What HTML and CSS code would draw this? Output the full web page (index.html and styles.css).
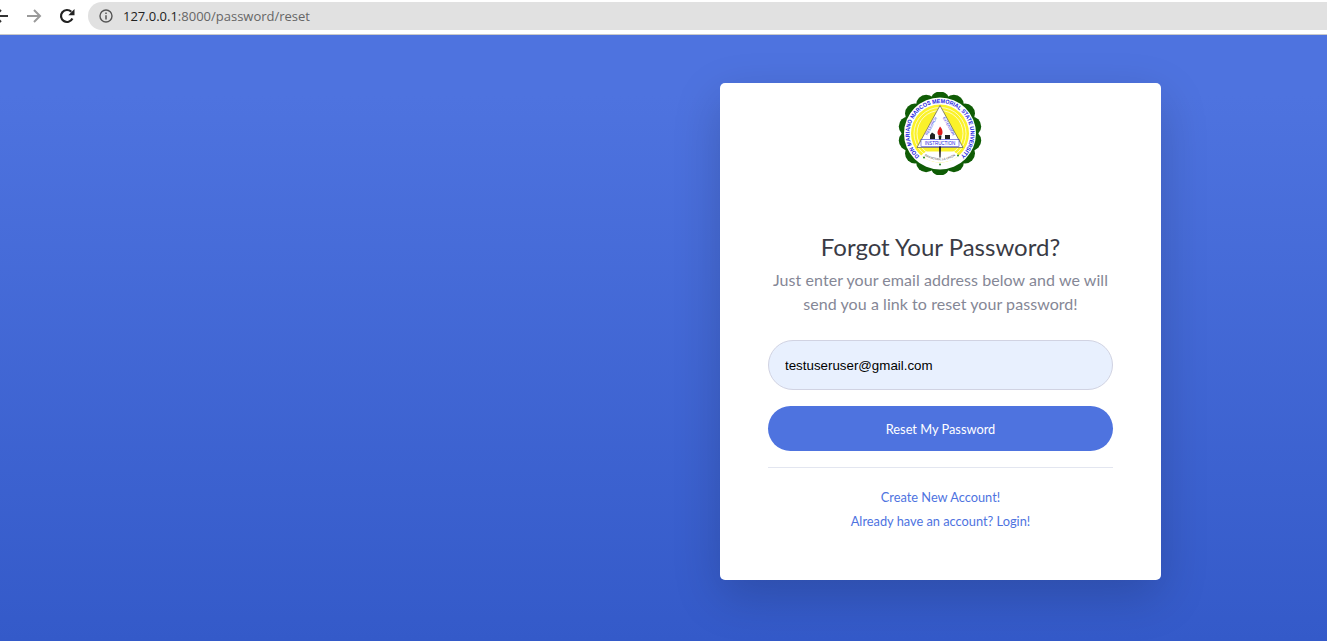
FILE: index.html
```html
<!DOCTYPE html>
<html lang="en">
<head>
    <meta charset="UTF-8">
    <meta name="viewport" content="width=device-width, initial-scale=1.0">
    <title>Forgot Password</title>
    <link rel="stylesheet" href="styles.css">
</head>
<body>

    <div class="toolbar">
        <svg class="nav-icon back" width="16" height="16" viewBox="0 0 16 16"><path d="M15 8H2M8 2L2 8l6 6" fill="none" stroke="#333" stroke-width="2"/></svg>
        <svg class="nav-icon forward" width="16" height="16" viewBox="0 0 16 16"><path d="M1 8h13M8 2l6 6-6 6" fill="none" stroke="#9a9a9a" stroke-width="2"/></svg>
        <svg class="nav-icon reload" width="16" height="16" viewBox="0 0 16 16"><path d="M13.4 10.600A6 6 0 1 1 12.300 3.800" fill="none" stroke="#222" stroke-width="2.200"/><path d="M15.500 1v6.200H9.300z" fill="#222"/></svg>
        <div class="address">
            <svg class="info-icon" width="14" height="14" viewBox="0 0 14 14"><circle cx="7" cy="7" r="6" fill="none" stroke="#555" stroke-width="1.400"/><path d="M7 6.200v4.200M7 3.400v1.600" stroke="#555" stroke-width="1.500"/></svg>
            <span class="host">127.0.0.1</span><span class="path">:8000/password/reset</span>
        </div>
    </div>

    <div class="page">
        <div class="card">
            <div class="logo">
                <svg width="84" height="83" viewBox="0 0.5 84 83">
                    <defs>
                        <path id="ring-top" d="M22.400 65.400A30.500 30.500 0 1 1 61.600 65.400"/>
                        <path id="ring-bottom" d="M24 62A27.500 27.500 0 0 0 60 62"/>
                        <path id="side-left" d="M28 46.500L40.500 24"/>
                        <path id="side-right" d="M43.500 24L56 46.500"/>
                    </defs>
                    <g fill="#0f5c05">
                        <circle cx="42" cy="42" r="36"/>
                        <circle cx="42" cy="10" r="10"/>
                        <circle cx="55.900" cy="13.200" r="10"/>
                        <circle cx="67" cy="22" r="10"/>
                        <circle cx="73.200" cy="34.900" r="10"/>
                        <circle cx="73.200" cy="49.100" r="10"/>
                        <circle cx="67" cy="62" r="10"/>
                        <circle cx="55.900" cy="70.800" r="10"/>
                        <circle cx="42" cy="74" r="10"/>
                        <circle cx="28.100" cy="70.800" r="10"/>
                        <circle cx="17" cy="62" r="10"/>
                        <circle cx="10.800" cy="49.100" r="10"/>
                        <circle cx="10.800" cy="34.900" r="10"/>
                        <circle cx="17" cy="22" r="10"/>
                        <circle cx="28.100" cy="13.200" r="10"/>
                    </g>
                    <circle cx="42" cy="42" r="36" fill="#fff"/>
                    <circle cx="42" cy="42" r="29" fill="#fbf22a"/>
                    <g fill="none" stroke="#fff" stroke-width="0.700">
                        <circle cx="42" cy="42" r="26"/>
                        <circle cx="42" cy="42" r="23"/>
                    </g>
                    <path d="M23 64A29 29 0 0 0 61 64L56 60H28z" fill="#fff"/>
                    <text class="logo-text"><textPath href="#ring-top" startOffset="50%" text-anchor="middle" textLength="146" lengthAdjust="spacingAndGlyphs">DON MARIANO MARCOS MEMORIAL STATE UNIVERSITY</textPath></text>
                    <text class="logo-small"><textPath href="#ring-bottom" startOffset="50%" text-anchor="middle">BACNOTAN, LA UNION</textPath></text>
                    <path d="M42 14L65 56H19z" fill="#fff" stroke="#555" stroke-width="0.700"/>
                    <text class="logo-side"><textPath href="#side-left" startOffset="50%" text-anchor="middle">RESEARCH</textPath></text>
                    <text class="logo-side"><textPath href="#side-right" startOffset="50%" text-anchor="middle">EXTENSION</textPath></text>
                    <rect x="23" y="48" width="38" height="7" fill="#fff" stroke="#1c1ccc" stroke-width="0.500"/>
                    <text class="logo-word" x="42" y="53.500" text-anchor="middle">INSTRUCTION</text>
                    <path d="M42 35c2 2 2.500 4 2.500 6 0 2-1 3-2.500 3s-2.500-1-2.500-3c0-2 1-3 2.500-6z" fill="#e01b1b"/>
                    <path d="M40.500 44h3l-.5 4h-2zM41 55h2l-.4 11h-1.200z" fill="#222"/>
                    <path d="M32 47.500v-4l2-2.500 3 2v4.500zM47 47.500v-4h5v4z" fill="#222"/>
                    <circle cx="26" cy="66" r="1" fill="#2a8a2a"/>
                    <circle cx="42" cy="73" r="1" fill="#2a8a2a"/>
                    <circle cx="60" cy="64" r="1" fill="#2a8a2a"/>
                </svg>
            </div>
            <div class="intro">
                <h1>Forgot Your Password?</h1>
                <p>Just enter your email address below and we will send you a link to reset your password!</p>
            </div>
            <form class="reset-form">
                <input class="email" type="email" value="testuseruser@gmail.com">
                <button type="button">Reset My Password</button>
            </form>
            <hr>
            <div class="links">
                <a href="#">Create New Account!</a>
                <a href="#">Already have an account? Login!</a>
            </div>
        </div>
    </div>

</body>
</html>
```

FILE: styles.css
```css
html, body {
    height: 100%;
}
body {
    margin: 0;
    display: flex;
    flex-direction: column;
    overflow: hidden;
    font-family: Lato, sans-serif;
}
.toolbar {
    height: 35px;
    box-sizing: border-box;
    padding-bottom: 2px;
    flex-shrink: 0;
    display: flex;
    align-items: center;
    background-color: #fff;
    border-bottom: 1px solid #c9c9c9;
}
.nav-icon {
    flex-shrink: 0;
}
.back {
    margin-left: -7px;
}
.forward {
    margin-left: 17px;
}
.reload {
    margin-left: 17px;
}
.address {
    flex: 1;
    height: 28px;
    margin-left: 13px;
    margin-right: -20px;
    padding-left: 11px;
    display: flex;
    align-items: center;
    background-color: #e1e1e1;
    border-radius: 14px;
    font-family: "Open Sans", sans-serif;
    font-size: 13px;
}
.info-icon {
    margin-right: 10px;
}
.host {
    color: #222;
}
.path {
    color: #666;
}
.page {
    flex: 1;
    padding-top: 48px;
    padding-right: 166px;
    display: flex;
    justify-content: flex-end;
    align-items: flex-start;
    background-color: #4e73df;
    background-image: linear-gradient(180deg, #4e73df 10%, #345ac9 100%);
}
.card {
    width: 441px;
    height: 497px;
    box-sizing: border-box;
    padding: 9px 48px 0;
    background-color: #fff;
    border-radius: 5px;
    box-shadow: 0 16px 48px rgba(0, 0, 0, 0.175);
}
.logo {
    display: flex;
    justify-content: center;
    height: 84px;
    padding-right: 1px;
}
.logo-text {
    font-family: "Liberation Sans", sans-serif;
    font-size: 5.800px;
    font-weight: bold;
    fill: #1a1ae0;
}
.logo-small {
    font-family: "Liberation Sans", sans-serif;
    font-size: 3px;
    fill: #444;
}
.logo-side {
    font-family: "Liberation Sans", sans-serif;
    font-size: 3.600px;
    fill: #1a1ae0;
}
.logo-word {
    font-family: "Liberation Sans", sans-serif;
    font-size: 4.500px;
    fill: #1a1ae0;
}
.intro {
    margin-top: 56px;
    text-align: center;
}
h1 {
    margin: 0;
    font-size: 24px;
    font-weight: 400;
    line-height: 29px;
    color: #3a3b45;
}
p {
    margin: 7px 0 0;
    font-size: 16px;
    line-height: 24px;
    letter-spacing: 0.06px;
    color: #858796;
}
.reset-form {
    margin-top: 24px;
    display: flex;
    flex-direction: column;
    gap: 16px;
}
.email {
    height: 50px;
    box-sizing: border-box;
    padding: 0 16px;
    background-color: #e8f0fe;
    border: 1px solid #d1d3e2;
    border-radius: 25px;
    font-family: "Liberation Sans", sans-serif;
    font-size: 13.333px;
    color: #000;
    outline: none;
}
button {
    height: 45px;
    background-color: #4e73df;
    border: none;
    border-radius: 23px;
    font-family: Lato, sans-serif;
    font-size: 12.800px;
    color: #fff;
    cursor: pointer;
}
hr {
    margin: 16px 0 0;
    border: none;
    border-top: 1px solid #e3e6f0;
}
.links {
    margin-top: 20px;
    display: flex;
    flex-direction: column;
    align-items: center;
    gap: 6px;
}
a {
    font-size: 12.800px;
    line-height: 18px;
    color: #4e73df;
    text-decoration: none;
}
```
